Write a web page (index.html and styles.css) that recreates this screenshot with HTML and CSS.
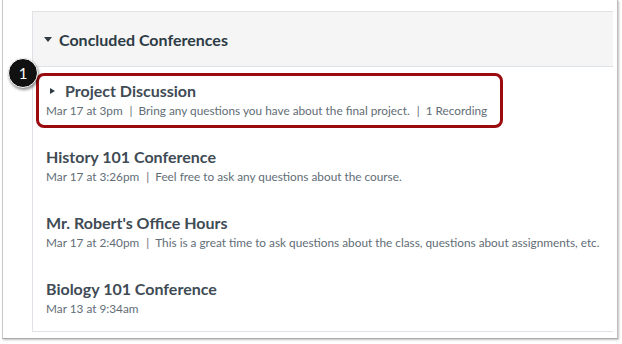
FILE: index.html
```html
<!DOCTYPE html>
<html>
<head>
<meta charset="utf-8">
<link rel="stylesheet" href="styles.css">
</head>
<body>
<div class="frame">
  <div class="panel">
    <div class="header">
      <span class="tri-down"></span>
      <span class="header-title">Concluded Conferences</span>
    </div>
    <div class="row row-first">
      <div class="title"><span class="tri-right"></span>Project Discussion</div>
      <div class="meta">Mar 17 at 3pm<span class="sep">|</span>Bring any questions you have about the final project.<span class="sep">|</span>1 Recording</div>
      <div class="highlight"></div>
      <div class="badge">1</div>
    </div>
    <div class="row">
      <div class="title">History 101 Conference</div>
      <div class="meta">Mar 17 at 3:26pm<span class="sep">|</span>Feel free to ask any questions about the course.</div>
    </div>
    <div class="row">
      <div class="title">Mr. Robert's Office Hours</div>
      <div class="meta">Mar 17 at 2:40pm<span class="sep">|</span>This is a great time to ask questions about the class, questions about assignments, etc.</div>
    </div>
    <div class="row">
      <div class="title">Biology 101 Conference</div>
      <div class="meta">Mar 13 at 9:34am</div>
    </div>
  </div>
</div>
</body>
</html>
```

FILE: styles.css
```css
html, body {
  margin: 0;
  padding: 0;
  background: #ffffff;
}
body {
  font-family: Lato, "Open Sans", "Liberation Sans", sans-serif;
  width: 622px;
  height: 344px;
  overflow: hidden;
}
.frame {
  margin-left: 2px;
  width: 616px;
  height: 339px;
  box-sizing: border-box;
  border-left: 1px solid #c9c9c9;
  border-right: 1px solid #bdbdbd;
  border-bottom: 1px solid #a9a9a9;
  box-shadow: 1px 1px 2px rgba(0,0,0,0.25);
  padding: 11px 4px 0 29px;
  background: #fff;
}
.panel {
  border-left: 1px solid #dfe3e7;
  border-bottom: 1px solid #dfe3e7;
}
.header {
  height: 54px;
  background: #f5f5f5;
  border-top: 1px solid #e2e2e2;
  border-bottom: 1px solid #dde4ea;
  display: flex;
  align-items: center;
  padding-left: 11px;
}
.tri-down {
  width: 0;
  height: 0;
  border-left: 4px solid transparent;
  border-right: 4px solid transparent;
  border-top: 5px solid #2d3b45;
  margin-right: 7px;
  margin-top: 1px;
}
.header-title {
  font-size: 16px;
  font-weight: 700;
  color: #2d3b45;
}
.row {
  position: relative;
  padding: 13px 0 13px 13px;
}
.title {
  font-size: 16px;
  font-weight: 700;
  line-height: 22px;
  color: #3f4b55;
  display: flex;
  align-items: center;
}
.row-first .title {
  padding-left: 4px;
}
.tri-right {
  width: 0;
  height: 0;
  border-top: 3.5px solid transparent;
  border-bottom: 3.5px solid transparent;
  border-left: 5px solid #2d3b45;
  margin-right: 10px;
}
.meta {
  font-size: 11.8px;
  line-height: 18px;
  color: #626d76;
  white-space: nowrap;
}
.sep {
  display: inline-block;
  margin: 0 6px 0 7px;
}
.highlight {
  position: absolute;
  left: 3px;
  top: 6px;
  width: 467px;
  height: 55px;
  box-sizing: border-box;
  border: 3px solid #9b0a0f;
  border-radius: 8px;
}
.badge {
  position: absolute;
  left: -25px;
  top: -9px;
  width: 30px;
  height: 30px;
  box-sizing: border-box;
  border-radius: 50%;
  background: #111;
  border: 1px solid #fff;
  box-shadow: 1px 2px 3px rgba(0,0,0,0.45);
  color: #fff;
  font-size: 15px;
  display: flex;
  align-items: center;
  justify-content: center;
}
```
